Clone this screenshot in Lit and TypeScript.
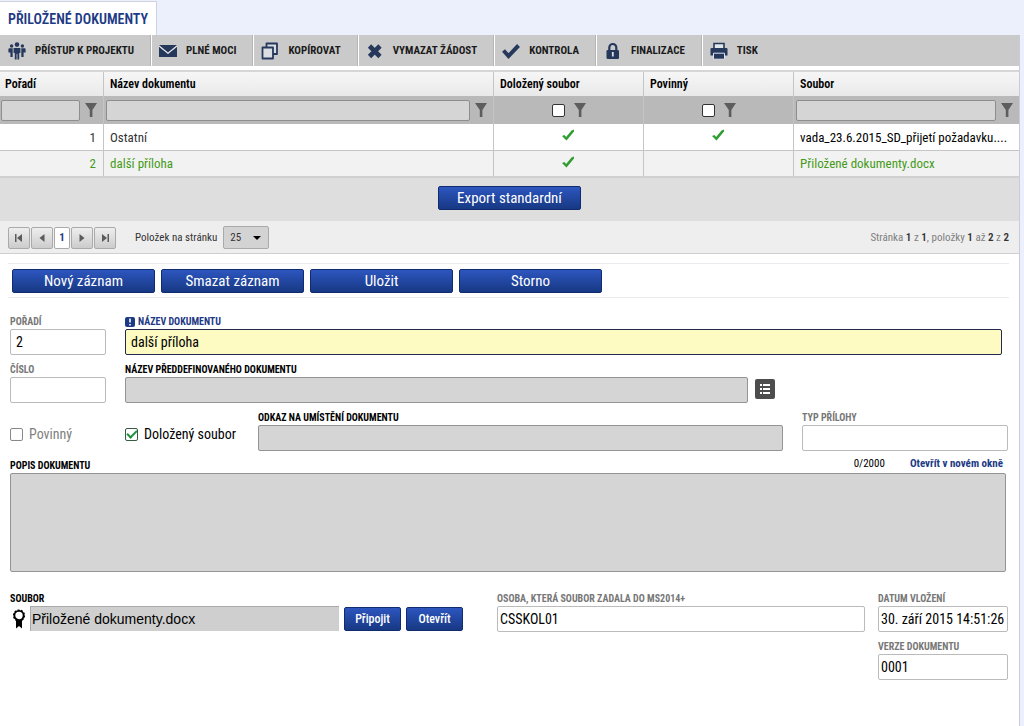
import { LitElement, html, svg, css, nothing } from "lit";
import { customElement, state } from "lit/decorators.js";
import { classMap } from "lit/directives/class-map.js";

const icons = {
  people: svg`<svg class="ico" viewBox="0 0 18 18" fill="#26395c"><circle cx="9" cy="2.6" r="2.3"/><circle cx="3.6" cy="4" r="1.7"/><circle cx="14.4" cy="4" r="1.7"/><path d="M5.6 6h6.8v5h-1.2v6.5H9.4V12h-.8v5.5H6.8V11H5.600z"/><path d="M1 6.200h3.700v8.800H2.400v-4.500H.4V7zM17 6.200h-3.700v8.800h2.300v-4.500h2V7z"/></svg>`,
  mail: svg`<svg class="ico" viewBox="0 0 18 18" fill="#26395c"><path d="M0 3h18L9 10.500z"/><path d="M0 4.800l9 7.300 9-7.300V15H0z"/><path d="M0 4l9 7.300L18 4" fill="none" stroke="#e4e8ee"/></svg>`,
  copy: svg`<svg class="ico" viewBox="0 0 18 18" fill="#dadde2" stroke="#26395c" stroke-width="1.800" stroke-linejoin="round"><path d="M5.500 1.500h10.500v10.500H5.500z"/><path d="M1.500 5.500H12V16.500H1.500z"/></svg>`,
  cross: svg`<svg class="ico" viewBox="0 0 18 18" stroke="#26395c" stroke-width="4.600"><path d="M3.500 4l10.500 10.500M14 4L3.500 14.500"/></svg>`,
  check: svg`<svg class="ico" viewBox="0 0 18 18" fill="none" stroke="#26395c" stroke-width="4"><path d="M1.500 8.500l5 5.500L16.500 3.500"/></svg>`,
  lock: svg`<svg class="ico" viewBox="0 0 18 18"><path d="M5.300 9V5.500a3.500 3.500 0 0 1 7 0V9" fill="none" stroke="#26395c" stroke-width="2.200"/><rect x="2.500" y="8" width="12.500" height="9" rx="1.300" fill="#26395c"/><path d="M8.800 10v4.500" stroke="#dde1e8" stroke-width="1.800"/></svg>`,
  print: svg`<svg class="ico" viewBox="0 0 18 18"><path d="M4 6V1.500h10V6" fill="#e2e5ea" stroke="#26395c" stroke-width="1.600"/><path d="M1.500 6h15a1 1 0 0 1 1 1v6.500H.5V7a1 1 0 0 1 1-1z" fill="#26395c"/><path d="M3.500 11.200h11v6h-11z" fill="#26395c" stroke="#dfe3ea"/></svg>`,
};

const funnel = svg`<svg class="funnel" viewBox="0 0 12 14" fill="#5d5d5d"><path d="M0 0h12L7.400 7v7H4.800V7z"/></svg>`;
const tick = svg`<svg class="tick" viewBox="0 0 12 12" fill="#2f9e31"><path d="M0 7l2.500-1 1.600 2L9.500 1.500 12 .5v2L4.500 11.500z"/></svg>`;

const tools = [
  { icon: icons.people, label: "PŘÍSTUP K PROJEKTU" },
  { icon: icons.mail, label: "PLNÉ MOCI" },
  { icon: icons.copy, label: "KOPÍROVAT" },
  { icon: icons.cross, label: "VYMAZAT ŽÁDOST" },
  { icon: icons.check, label: "KONTROLA" },
  { icon: icons.lock, label: "FINALIZACE" },
  { icon: icons.print, label: "TISK" },
];

const documents = [
  { order: 1, name: "Ostatní", attached: true, required: true, file: "vada_23.6.2015_SD_přijetí požadavku...." },
  { order: 2, name: "další příloha", attached: true, required: false, file: "Přiložené dokumenty.docx" },
];

@customElement("app-root")
export class AppRoot extends LitElement {
  @state() private selected = 2;

  static styles = css`
    :host { display: block; min-height: 100vh; background: #ecf0fc; color: #000;
      font-family: "Roboto Condensed", Roboto, sans-serif; font-size: 14px; line-height: 18px; }
    * { box-sizing: border-box; }
    button, input, select, textarea { font: inherit; color: inherit; margin: 0; }
    button { cursor: pointer; padding: 0; }
    .page { display: flex; flex-direction: column; min-height: 100vh; margin-right: 4px; }
    .tab { align-self: flex-start; margin: 1px 0 0; padding: 9px 8px 7px 8px; background: #fff; border: solid #d0d3de; border-width: 1px 1px 0 0;
      color: #1d3a85; font-size: 14px; line-height: 17px; font-weight: 600; }
    .panel { flex: 1; background: #fff; border-right: 1px solid #c9cbd8; }
    .toolbar { display: flex; background: #cacaca; height: 31px; }
    .tool { display: flex; align-items: center; gap: 9px; padding: 0 16px 0 8px; border: 0; border-right: 1px solid #b5b5b5; box-shadow: 1px 0 #fff; background: none;
      font-size: 11px; font-weight: 700; color: #1a1a1a; white-space: nowrap; }
    .tool:last-child { border: 0; box-shadow: none; }
    .ico { width: 18px; height: 18px; flex: none; }
    .grid { width: 100%; margin-top: 4px; table-layout: fixed; border-collapse: separate; border-spacing: 0; border-top: 2px solid #d6d6d6; border-bottom: 2px solid #d0d0d0; }
    .grid th, .grid td { border-left: 1px solid #c5c5c5; padding: 0 4px 0 6px; white-space: nowrap; font-size: 13px; }
    .grid th:first-child, .grid td:first-child { border-left: 0; padding-right: 7px; }
    .grid th { height: 24px; padding: 0 6px; text-align: left; font-size: 12px; font-weight: 600; background: linear-gradient(#f6f6f6, #e9e9e9); }
    .grid th:first-child { padding-left: 5px; }
    .c-order { width: 103px; } .c-flag { width: 150px; } .c-file { width: 226px; }
    .grid .filters td { height: 28px; padding: 0 6px 0 2px; background: #b9b9b9; }
    .grid .filters td:first-child { padding-left: 1px; }
    .filter { display: flex; align-items: center; justify-content: center; gap: 5px; }
    .filter.flag { gap: 9px; padding-left: 5px; }
    .filter input[type="text"] { flex: 1; min-width: 0; height: 21px; border: 1px solid #8e8e8e; border-radius: 2px; background: #d5d5d5; padding: 0 3px; }
    .funnel { width: 12px; height: 14px; flex: none; }
    .grid .row td { height: 26px; padding-top: 1px; color: #333; }
    .grid .row + .row td { border-top: 1px solid #c5c5c5; background: #f2f2f2; }
    .grid .row td:first-child { text-align: right; }
    .grid .row .mark { text-align: center; padding: 0 1px 0 0; }
    .grid .row td.file { color: #000; }
    .grid .row.active td, .grid .row.active td.file { color: #459a1a; }
    .tick { width: 12px; height: 12px; display: inline-block; }
    input[type="checkbox"] { appearance: none; width: 13px; height: 13px; flex: none; border: 1px solid #333; border-radius: 2px; background: #fff; display: grid; place-items: center; }
    .export { display: flex; justify-content: center; padding: 8px 0 11px; background: #dedede; }
    .blue { height: 24px; min-width: 143px; border: 1px solid #102c6e; border-radius: 2px; color: #fff; font-size: 15px; line-height: 20px; background: linear-gradient(#2d56bf, #173883); }
    .blue.small { min-width: 57px; font-size: 12px; font-weight: 500; }
    .pager { display: flex; align-items: center; padding: 1px 10px 0 8px; height: 33px; background: #eee; border-bottom: 1px solid #cfcfcf; font-size: 11px; color: #333; }
    .pages { display: flex; gap: 1px; }
    .nav { width: 22px; height: 22px; border: 1px solid #aaa; border-radius: 2px; background: linear-gradient(#eee, #ccc); display: grid; place-items: center; }
    .nav svg { width: 12px; height: 10px; }
    .nav.now { width: 16px; background: #fff; color: #1d3a85; font-weight: 700; }
    .per { margin: 0 6px 0 19px; }
    .pick { display: grid; width: 46px; align-items: center; }
    .pick > * { grid-area: 1 / 1; }
    .pick select { appearance: none; height: 23px; padding: 0 6px; border: 1px solid #aaa; border-radius: 2px; background: #d3d3d3; }
    .pick svg { width: 8px; height: 4px; justify-self: end; margin-right: 8px; pointer-events: none; }
    .count { margin-left: auto; color: #808080; } .count b { color: #333; font-weight: 600; }
    .actions { display: flex; flex-wrap: wrap; gap: 6px; margin: 9px 10px 0 8px; padding: 5px 4px 4px; border: solid #eceaee; border-width: 1px 0; }
    .form { display: flex; flex-direction: column; gap: 8px; padding: 17px 11px 20px 10px; }
    .line { display: grid; column-gap: 19px; }
    .l-name { grid-template-columns: 96px minmax(0, 1fr); padding-right: 6px; }
    .l-preset { grid-template-columns: 96px minmax(0, 1fr); padding-right: 233px; }
    .l-flags { grid-template-columns: 96px 114px minmax(0, 1fr) 206px; }
    .l-file { grid-template-columns: 474px minmax(0, 1fr) 130px; column-gap: 13px; margin-top: 12px; align-items: start; }
    .field { display: flex; flex-direction: column; min-width: 0; }
    .field > label, .caption { font-size: 10px; line-height: 14px; font-weight: 700; white-space: nowrap; }
    .field > label { display: flex; align-items: center; gap: 3px; }
    .field > label svg { width: 10px; height: 10px; }
    .soft > label { color: #777; }
    .must > label { color: #1d3a85; }
    .field > input { width: 100%; height: 26px; border: 1px solid #bbb; border-radius: 2px; padding: 0 5px; background: #fff; font-size: 14px; }
    .tight > input { padding: 0 2px; }
    .field.off > input, .memo { background: #d5d5d5; border: 1px solid #949494; }
    .must > input { background: #fdfac2; border-color: #222b4e; }
    .lookup { display: flex; gap: 7px; }
    .lookup .field { flex: 1; }
    .list { align-self: flex-end; width: 20px; height: 20px; margin-bottom: 4px; border: 0; border-radius: 2px; background: #4d4d4d; display: grid; place-items: center; }
    .list svg { width: 12px; height: 12px; }
    .box { display: flex; align-items: center; gap: 6px; align-self: center; padding-top: 6px; white-space: nowrap; font-size: 14px; }
    .box.soft { color: #808080; }
    .box.soft input { border-color: #888; }
    .box input:checked { border-color: #355c42; }
    .box input:checked::after { content: ""; width: 8px; height: 4px; border: solid #1f8f3a; border-width: 0 0 2px 2px; transform: translateY(-1px) rotate(-45deg); }
    .memohead { display: flex; height: 14px; gap: 25px; padding-right: 5px; font-size: 11px; line-height: 10px; }
    .memohead label { margin-right: auto; }
    .memohead a { color: #1d3a85; font-weight: 700; text-decoration: none; }
    .memo { display: block; width: calc(100% - 2px); height: 99px; border-radius: 2px; resize: none; }
    .attach { display: flex; align-items: center; }
    .attach svg { width: 14px; height: 20px; margin: 0 4px 0 2px; flex: none; }
    .attach input { flex: 1; min-width: 0; height: 25px; padding: 0 1px; border: 0; border-top: 1px solid #aaa; border-left: 1px solid #aaa; background: #cfcfcf; font-family: "Liberation Sans", sans-serif; font-size: 14px; }
    .attach .blue { margin-left: 5px; }
    .upload { padding-right: 21px; }
    .stack { display: flex; flex-direction: column; gap: 8px; }
  `;

  private field(id: string, label: string, value: string, kind: string) {
    const must = kind.includes("must");
    return html`<div class="field ${kind}">
      <label for=${id}>${must ? svg`<svg viewBox="0 0 10 10"><rect width="10" height="10" rx="2" fill="#1d3a85"/><path d="M5 1.500v4M5 7v1.500" stroke="#fff" stroke-width="1.600"/></svg>` : nothing}${label}</label>
      <input id=${id} type="text" .value=${value} ?readonly=${kind.includes("off")} />
    </div>`;
  }

  private nav(label: string, path: string) {
    return html`<button class="nav" aria-label=${label}>${svg`<svg viewBox="0 0 12 10" fill="#5b5b5b"><path d=${path}/></svg>`}</button>`;
  }

  render() {
    return html`<main class="page">
      <h1 class="tab">PŘILOŽENÉ DOKUMENTY</h1>
      <div class="panel">
        <div class="toolbar">${tools.map((t) => html`<button class="tool">${t.icon}<span>${t.label}</span></button>`)}</div>
        <table class="grid">
          <colgroup><col class="c-order" /><col /><col class="c-flag" /><col class="c-flag" /><col class="c-file" /></colgroup>
          <thead>
            <tr><th>Pořadí</th><th>Název dokumentu</th><th>Doložený soubor</th><th>Povinný</th><th>Soubor</th></tr>
            <tr class="filters">
              <td><div class="filter"><input type="text" aria-label="Pořadí" />${funnel}</div></td>
              <td><div class="filter"><input type="text" aria-label="Název dokumentu" />${funnel}</div></td>
              <td><div class="filter flag"><input type="checkbox" aria-label="Doložený soubor" />${funnel}</div></td>
              <td><div class="filter flag"><input type="checkbox" aria-label="Povinný" />${funnel}</div></td>
              <td><div class="filter"><input type="text" aria-label="Soubor" />${funnel}</div></td>
            </tr>
          </thead>
          <tbody>
            ${documents.map((d) => html`<tr class=${classMap({ row: true, active: d.order === this.selected })} @click=${() => (this.selected = d.order)}>
              <td>${d.order}</td><td>${d.name}</td>
              <td class="mark">${d.attached ? tick : nothing}</td>
              <td class="mark">${d.required ? tick : nothing}</td>
              <td class="file">${d.file}</td>
            </tr>`)}
          </tbody>
        </table>
        <div class="export"><button class="blue">Export standardní</button></div>
        <div class="pager">
          <div class="pages">
            ${this.nav("První", "M2 1h1.500v8H2zM9 1v8L4 5z")}
            ${this.nav("Předchozí", "M8.500 1v8L3.500 5z")}
            <button class="nav now">1</button>
            ${this.nav("Další", "M3.500 1v8l5-4z")}
            ${this.nav("Poslední", "M3 1v8l5-4zM8.500 1H10v8H8.500z")}
          </div>
          <label class="per" for="per">Položek na stránku</label>
          <div class="pick"><select id="per"><option>25</option><option>50</option></select>${svg`<svg viewBox="0 0 8 4"><path d="M0 0h8L4 4z"/></svg>`}</div>
          <div class="count">Stránka <b>1</b> z <b>1</b>, položky <b>1</b> až <b>2</b> z <b>2</b></div>
        </div>
        <div class="actions">${["Nový záznam", "Smazat záznam", "Uložit", "Storno"].map((a) => html`<button class="blue">${a}</button>`)}</div>
        <form class="form" @submit=${(e: Event) => e.preventDefault()}>
          <div class="line l-name">
            ${this.field("poradi", "POŘADÍ", "2", "soft")}
            ${this.field("nazev", "NÁZEV DOKUMENTU", "další příloha", "must")}
          </div>
          <div class="line l-preset">
            ${this.field("cislo", "ČÍSLO", "", "soft")}
            <div class="lookup">
              ${this.field("preset", "NÁZEV PŘEDDEFINOVANÉHO DOKUMENTU", "", "off")}
              <button type="button" class="list" aria-label="Vybrat ze seznamu">${svg`<svg viewBox="0 0 12 12" fill="#fff"><path d="M1 1h2v2H1zM4 1h7v2H4zM1 5h2v2H1zM4 5h7v2H4zM1 9h2v2H1zM4 9h7v2H4z"/></svg>`}</button>
            </div>
          </div>
          <div class="line l-flags">
            <label class="box soft"><input type="checkbox" />Povinný</label>
            <label class="box"><input type="checkbox" checked />Doložený soubor</label>
            ${this.field("odkaz", "ODKAZ NA UMÍSTĚNÍ DOKUMENTU", "", "off")}
            ${this.field("typ", "TYP PŘÍLOHY", "", "soft")}
          </div>
          <div>
            <div class="memohead"><label class="caption" for="popis">POPIS DOKUMENTU</label><span>0/2000</span><a href="#popis">Otevřít v novém okně</a></div>
            <textarea class="memo" id="popis" readonly></textarea>
          </div>
          <div class="line l-file">
            <div class="field upload"><label for="soubor">SOUBOR</label>
              <div class="attach">
                ${svg`<svg viewBox="0 0 14 20"><circle cx="7" cy="6.500" r="4.600" fill="#fff" stroke="#000" stroke-width="1.800"/><circle cx="7" cy="6.500" r="5.500" fill="none" stroke="#000" stroke-width="1.200" stroke-dasharray="2 1.400"/><path d="M4 11h6v8.500l-3-2.500-3 2.500z"/></svg>`}
                <input id="soubor" type="text" readonly .value=${"Přiložené dokumenty.docx"} />
                <button type="button" class="blue small">Připojit</button><button type="button" class="blue small">Otevřít</button>
              </div>
            </div>
            ${this.field("osoba", "OSOBA, KTERÁ SOUBOR ZADALA DO MS2014+", "CSSKOL01", "soft tight")}
            <div class="stack">
              ${this.field("datum", "DATUM VLOŽENÍ", "30. září 2015 14:51:26", "soft tight")}
              ${this.field("verze", "VERZE DOKUMENTU", "0001", "soft tight")}
            </div>
          </div>
        </form>
      </div>
    </main>`;
  }
}
